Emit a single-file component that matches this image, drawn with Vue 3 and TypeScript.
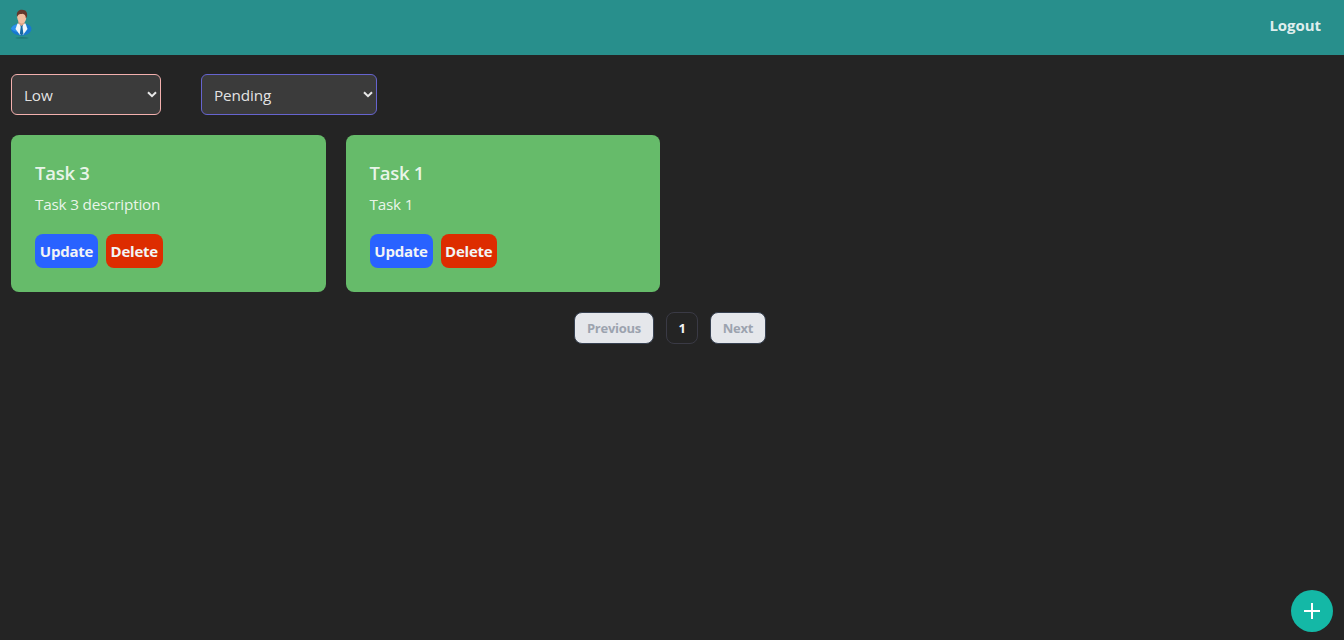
<script setup lang="ts">
import { ref } from 'vue'

interface Task {
  id: number
  title: string
  description: string
}

const priority = ref('Low')
const status = ref('Pending')
const tasks: Task[] = [
  { id: 3, title: 'Task 3', description: 'Task 3 description' },
  { id: 1, title: 'Task 1', description: 'Task 1' },
]
</script>

<template>
  <div class="page">
    <header class="bar">
      <svg class="avatar" width="24" height="30" viewBox="0 0 24 30">
        <ellipse cx="12" cy="28.900" rx="6.500" ry="0.700" fill="#1d7370" />
        <path d="M1 20C1.500 17 5 15.800 8 14.800H15.500C19 15.800 21.500 17 21.500 20C21 24 16.500 26.500 11.500 26.500C6 26.500 1.500 24 1 20Z" fill="#1878cf" />
        <path d="M1 20C1.500 17 5 15.800 8 14.800L7 23L4 22Z" fill="#2b93ec" />
        <path d="M7.500 14.500H15.500L17.500 20L13 26H10L5.500 20Z" fill="#f1f7fa" />
        <path d="M10.200 15.500H13L12.500 18L13.400 25L11.600 26.500L9.800 25L10.700 18Z" fill="#1769a6" />
        <path d="M8.300 12H14.500V14.800L11.500 17L8.300 14.500Z" fill="#dda184" />
        <path d="M7.200 6C8 3 15.500 2.500 16.400 6L16 10.500C15 13.800 12.800 14.500 11.500 14.500C9 14 7.600 11.500 7.200 8.500Z" fill="#f2be9f" />
        <path d="M6.900 7C6.400 2.500 9 .8 12 .8C16 .8 18 3.500 16.900 8.200L15.800 9C15.700 6.500 14.500 5 12.500 4.700C10.500 5.300 8.300 4.500 7.600 7.500Z" fill="#64382c" />
      </svg>
      <a class="logout">Logout</a>
    </header>

    <main class="content">
      <div class="filters">
        <label class="select low">
          <span>{{ priority }}</span>
          <svg width="10" height="7" viewBox="0 0 10 7"><path d="M1 1.200L5 5.200L9 1.200" /></svg>
        </label>
        <label class="select pending">
          <span>{{ status }}</span>
          <svg width="10" height="7" viewBox="0 0 10 7"><path d="M1 1.200L5 5.200L9 1.200" /></svg>
        </label>
      </div>

      <div class="grid">
        <article v-for="task in tasks" :key="task.id" class="card">
          <h2>{{ task.title }}</h2>
          <p>{{ task.description }}</p>
          <div class="actions">
            <button class="update">Update</button>
            <button class="delete">Delete</button>
          </div>
        </article>
      </div>

      <nav class="pager">
        <button class="step prev" disabled>Previous</button>
        <button class="current">1</button>
        <button class="step next" disabled>Next</button>
      </nav>
    </main>

    <button class="add" aria-label="Add task">
      <svg width="16" height="16" viewBox="0 0 16 16"><path d="M8 0V16M0 8H16" /></svg>
    </button>
  </div>
</template>

<style>
body {
  background: #242424;
}
</style>

<style scoped>
.page {
  height: 640px;
  position: relative;
  overflow: hidden;
  background: #242424;
  color: rgba(255, 255, 255, 0.87);
  font: 400 16px/24px 'Segoe UI', 'Open Sans', 'Noto Sans', sans-serif;
}
.bar {
  height: 55px;
  box-sizing: border-box;
  padding: 9px 23px 0 10px;
  background: #288f8c;
  display: flex;
  justify-content: space-between;
}
.logout {
  margin-top: 4px;
  font-size: 15px;
  font-weight: 700;
  letter-spacing: -0.05px;
}
.content {
  padding: 19px 15px 0 11px;
}
.filters {
  display: flex;
  gap: 40px;
}
.select {
  height: 41px;
  box-sizing: border-box;
  display: flex;
  align-items: center;
  justify-content: space-between;
  padding: 0 3px 0 12px;
  border: 1px solid;
  border-radius: 6px;
  background: #3b3b3b;
}
.select svg {
  fill: none;
  stroke: #e8e8e8;
  stroke-width: 2;
}
.low {
  width: 150px;
  border-color: #f3b0ae;
}
.pending {
  width: 176px;
  border-color: #6664cf;
}
.select span {
  font-size: 15.300px;
  letter-spacing: -0.12px;
}
.grid {
  margin-top: 20px;
  display: grid;
  grid-template-columns: repeat(4, 1fr);
  gap: 20px;
}
.card {
  height: 157px;
  box-sizing: border-box;
  padding: 24px;
  border-radius: 8px;
  background: #66bb6a;
}
h2 {
  margin: 0 0 5px;
  font-size: 18.500px;
  line-height: 28px;
  font-weight: 600;
  letter-spacing: -0.25px;
}
p {
  margin: 0 0 18px;
  font-size: 15.300px;
  line-height: 24px;
  letter-spacing: -0.2px;
}
.actions {
  display: flex;
  gap: 8px;
}
button {
  box-sizing: border-box;
  padding: 0;
  border: 0;
  font-family: inherit;
  font-weight: 700;
  white-space: nowrap;
}
.actions button {
  height: 34px;
  border-radius: 8px;
  font-size: 15px;
  line-height: 35px;
  letter-spacing: -0.25px;
  color: #f3f4f6;
}
.update {
  width: 63px;
  background: #2962ff;
}
.delete {
  width: 56.500px;
  background: #dd2c00;
}
.pager {
  margin-top: 20px;
  display: flex;
  justify-content: center;
  gap: 12px;
}
.pager button {
  height: 32px;
  border: 1px solid #374151;
  border-radius: 8px;
  font-size: 13px;
  line-height: 30px;
  letter-spacing: -0.25px;
}
.pager .step {
  background: #e5e7eb;
  color: #9ca3af;
}
.pager .prev {
  width: 80px;
}
.pager .current {
  width: 32px;
  background: transparent;
  border-color: #3a3a45;
  color: #f3f4f6;
}
.pager .next {
  width: 56px;
}
.add {
  position: absolute;
  right: 11px;
  bottom: 8px;
  width: 42px;
  height: 42px;
  border-radius: 50%;
  background: #14b8a6;
  display: flex;
  align-items: center;
  justify-content: center;
}
.add svg {
  stroke: #fff;
  stroke-width: 2;
}
</style>
